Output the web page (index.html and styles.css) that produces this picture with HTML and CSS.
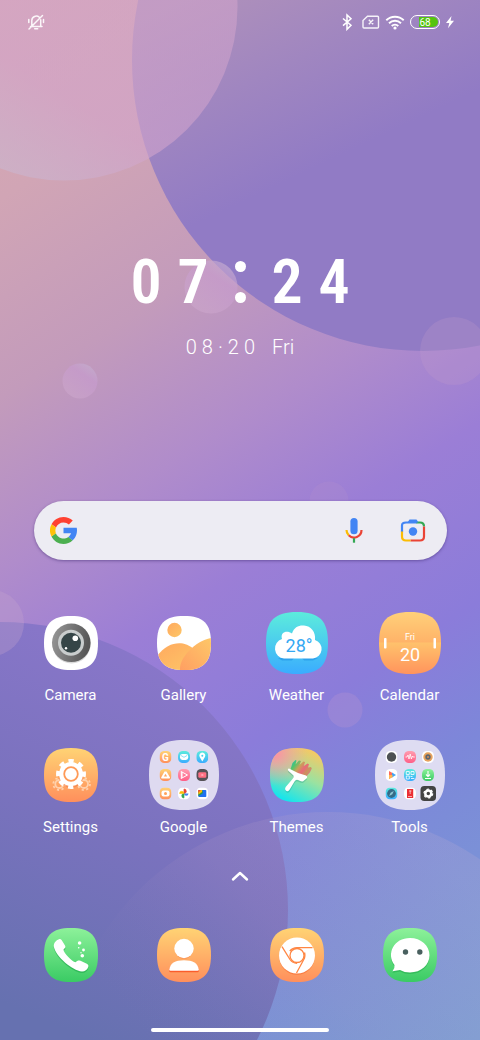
FILE: index.html
```html
<!DOCTYPE html>
<html lang="en">
<head>
<meta charset="utf-8">
<meta name="viewport" content="width=device-width, initial-scale=1">
<title>Home screen</title>
<link rel="stylesheet" href="styles.css">
</head>
<body>
<svg class="wallpaper" viewBox="0 0 480 1040" preserveAspectRatio="xMidYMid slice" aria-hidden="true">
  <defs>
    <linearGradient id="base" gradientUnits="userSpaceOnUse" x1="0" y1="0" x2="618" y2="989">
      <stop offset="0" stop-color="#d8a8b2"/><stop offset=".145" stop-color="#d1a5b5"/><stop offset=".29" stop-color="#c39bbb"/><stop offset=".415" stop-color="#b08ccb"/><stop offset=".525" stop-color="#9b7ed6"/><stop offset=".655" stop-color="#8b7cda"/><stop offset=".75" stop-color="#7d87d9"/><stop offset=".97" stop-color="#789fd4"/>
    </linearGradient>
    <linearGradient id="big" gradientUnits="userSpaceOnUse" x1="220" y1="-20" x2="310" y2="170">
      <stop offset="0" stop-color="#b091ba"/><stop offset=".5" stop-color="#a086c0"/><stop offset="1" stop-color="#917bc5"/>
    </linearGradient>
    <linearGradient id="tl" gradientUnits="userSpaceOnUse" x1="120" y1="20" x2="20" y2="180">
      <stop offset="0" stop-color="#d2a4cc" stop-opacity=".55"/><stop offset=".5" stop-color="#d2a4cc" stop-opacity=".6"/><stop offset="1" stop-color="#cab6d0" stop-opacity=".6"/>
    </linearGradient>
    <linearGradient id="bl" gradientUnits="userSpaceOnUse" x1="180" y1="640" x2="20" y2="1010">
      <stop offset="0" stop-color="#8b77cb"/><stop offset=".5" stop-color="#7a72be"/><stop offset="1" stop-color="#6671b0"/>
    </linearGradient>
    <linearGradient id="br" gradientUnits="userSpaceOnUse" x1="400" y1="812" x2="150" y2="1040">
      <stop offset="0" stop-color="#b8aad2" stop-opacity=".24"/><stop offset=".5" stop-color="#a890c4" stop-opacity=".2"/><stop offset="1" stop-color="#7c78b8" stop-opacity="0"/>
    </linearGradient>
    <linearGradient id="bubble" x1=".9" y1="0" x2=".3" y2=".9">
      <stop offset="0" stop-color="#c4b4d0" stop-opacity=".7"/><stop offset=".4" stop-color="#c89cd0" stop-opacity=".6"/><stop offset="1" stop-color="#cca6cc" stop-opacity=".6"/>
    </linearGradient>
  </defs>
  <rect width="480" height="1040" fill="url(#base)"/>
  <circle cx="423" cy="60" r="291" fill="url(#big)"/>
  <circle cx="64" cy="7" r="173.5" fill="url(#tl)"/>
  <circle cx="211" cy="287" r="26.5" fill="url(#bubble)"/>
  <circle cx="80" cy="381" r="17.5" fill="url(#bubble)"/>
  <circle cx="454" cy="351" r="34" fill="#c29ccc" fill-opacity=".25"/>
  <circle cx="329" cy="501" r="19.5" fill="#c29ccc" fill-opacity=".15"/>
  <circle cx="0" cy="910" r="288" fill="url(#bl)"/>
  <circle cx="-9" cy="623" r="33" fill="#c8a4cc" fill-opacity=".3"/>
  <circle cx="328" cy="1080" r="268" fill="url(#br)"/>
  <circle cx="345" cy="710" r="17.5" fill="#b896d0" fill-opacity=".3"/>
</svg>

<svg class="defs" width="0" height="0" aria-hidden="true">
  <defs>
    <linearGradient id="orange" x1="0" y1="0" x2="0" y2="1"><stop offset="0" stop-color="#ffd374"/><stop offset="1" stop-color="#ff8f5c"/></linearGradient>
    <linearGradient id="green" x1="0" y1="0" x2="0" y2="1"><stop offset="0" stop-color="#8df19a"/><stop offset="1" stop-color="#3acb64"/></linearGradient>
    <linearGradient id="blue" x1="0" y1="0" x2="0" y2="1"><stop offset="0" stop-color="#5cecdc"/><stop offset="1" stop-color="#3aacff"/></linearGradient>
    <linearGradient id="pink" x1="0" y1="0" x2="0" y2="1"><stop offset="0" stop-color="#ff9db0"/><stop offset="1" stop-color="#ff5f87"/></linearGradient>
    <linearGradient id="lens" x1="0" y1="0" x2="1" y2=".2"><stop offset="0" stop-color="#999"/><stop offset="1" stop-color="#575757"/></linearGradient>
    <linearGradient id="hill" x1="0" y1="0" x2="1" y2="1"><stop offset="0" stop-color="#ffa95f"/><stop offset="1" stop-color="#fdc768"/></linearGradient>
    <linearGradient id="hill2" x1="1" y1="0" x2="0" y2="1"><stop offset="0" stop-color="#fdc768"/><stop offset="1" stop-color="#ff9f62"/></linearGradient>
    <linearGradient id="calTop" x1="0" y1="0" x2="0" y2="1"><stop offset="0" stop-color="#ffd079"/><stop offset="1" stop-color="#ffb268"/></linearGradient>
    <linearGradient id="calBottom" x1="0" y1="0" x2="0" y2="1"><stop offset="0" stop-color="#ffc26c"/><stop offset="1" stop-color="#ff935c"/></linearGradient>
    <linearGradient id="theme" x1=".8" y1="0" x2=".3" y2="1"><stop offset="0" stop-color="#ffc65e"/><stop offset=".5" stop-color="#9be2a0"/><stop offset="1" stop-color="#10e5f0"/></linearGradient>
    <radialGradient id="themePink" cx=".1" cy=".1" r=".6"><stop offset="0" stop-color="#ff8fa4"/><stop offset="1" stop-color="#ff9fa0" stop-opacity="0"/></radialGradient>
    <linearGradient id="bristle" x1="0" y1=".2" x2="1" y2=".8"><stop offset="0" stop-color="#2fb8b0"/><stop offset=".2" stop-color="#4fc66a"/><stop offset=".4" stop-color="#c9a158"/><stop offset=".6" stop-color="#e86a78"/><stop offset=".8" stop-color="#c9955c"/><stop offset="1" stop-color="#e0679a"/></linearGradient>
    <symbol id="squircle" viewBox="0 0 54 54"><path d="M27 0C46.500 0 54 7.500 54 27S46.500 54 27 54 0 46.500 0 27 7.500 0 27 0Z"/></symbol>
    <clipPath id="clip"><path d="M27 0C46.500 0 54 7.500 54 27S46.500 54 27 54 0 46.500 0 27 7.500 0 27 0Z"/></clipPath>
    <clipPath id="clipLarge"><path d="M31 0C53.500 0 62 8.500 62 31S53.500 62 31 62 0 53.500 0 31 8.500 0 31 0Z"/></clipPath>
  </defs>
</svg>

<header class="status">
  <svg class="status-icon" viewBox="0 0 18 18" role="img" aria-label="Silent"><g fill="none" stroke="#fff" stroke-width="1.500" stroke-linecap="round" stroke-linejoin="round" opacity=".9"><path d="M3.500 13.500H15M4.800 13V7.500a4.500 4.500 0 0 1 7.500-3.200M13.700 6.800V13M7.700 15.800h3M2 16 15.500 2.500M1.800 6.500v3M16.500 6.500v3"/></g></svg>
  <div class="status-right">
    <svg class="bluetooth" viewBox="0 0 12 18" role="img" aria-label="Bluetooth"><path d="M2 5.500 10 12.300 6 16.300V2L10 5.800 2 12.600" fill="none" stroke="#fff" stroke-width="1.500"/></svg>
    <svg class="status-icon" viewBox="0 0 18 18" role="img" aria-label="No SIM"><path d="M5.500 3.300H15.500a1 1 0 0 1 1 1V14a1 1 0 0 1-1 1H2a1 1 0 0 1-1-1V7.500ZM6.800 6.800l4.400 4.400M11.200 6.800 6.800 11.200" fill="none" stroke="#fff" stroke-opacity=".9" stroke-width="1.400"/></svg>
    <svg class="wifi" viewBox="0 0 20 18" role="img" aria-label="Wi-Fi"><g fill="none" stroke="#fff" stroke-width="1.900"><path d="M1.300 7.200a12.500 12.500 0 0 1 17.400 0M4 10.200a8.600 8.600 0 0 1 12 0M6.700 13a4.800 4.800 0 0 1 6.600 0"/></g><circle cx="10" cy="15" r="1.600" fill="#fff"/></svg>
    <div class="battery"><span class="battery-level">68</span></div>
    <svg class="bolt" viewBox="0 0 10 14" role="img" aria-label="Charging"><path d="M6.500 1 1 8h3.300L3 13.200 9 5.800H5.600Z" fill="#fff"/></svg>
  </div>
</header>

<main class="home">
  <section class="clock" aria-label="Clock">
    <div class="time"><span>0</span><span>7</span><span class="colon"><i></i><i></i></span><span>2</span><span>4</span></div>
    <div class="date"><span>0</span><span>8</span><span>·</span><span>2</span><span>0</span><span class="day">Fri</span></div>
  </section>

  <form class="search" role="search">
    <svg class="g-logo" viewBox="4 4 40 40" aria-hidden="true">
      <path fill="#4285f4" d="M43.600 20H24v8h11.300c-.8 2.300-2.300 4.200-4.200 5.600l6.200 5.200C36.900 39.200 44 34 44 24c0-1.300-.1-2.700-.4-4z"/>
      <path fill="#ff4131" d="m6.300 14.700 6.600 4.800C14.700 15.100 19 12 24 12c3.100 0 5.800 1.200 8 3l5.700-5.700C34 6.100 29.300 4 24 4 16.300 4 9.700 8.300 6.300 14.700z"/>
      <path fill="#4caf50" d="M24 44c5.200 0 9.900-2 13.400-5.200l-6.200-5.200A12 12 0 0 1 12.700 28l-6.500 5C9.500 39.600 16.200 44 24 44z"/>
      <path fill="#ffc107" d="M6.300 14.700a20 20 0 0 0-.1 18.300l6.500-5a12 12 0 0 1 .2-8.500z"/>
    </svg>
    <input class="search-input" type="text" aria-label="Search">
    <button class="search-button" type="button" aria-label="Voice search">
      <svg class="mic" viewBox="0 0 24 28"><rect x="8.400" y="1" width="7.200" height="16.300" rx="3.600" fill="#4285f4"/><g fill="none" stroke-width="2.200"><path d="M4.500 13a7.500 7.500 0 0 0 2.200 5.300" stroke="#fbbc04"/><path d="M6.700 18.300A7.500 7.500 0 0 0 19.500 13" stroke="#ea4335"/><path d="M12 21.200v4.500" stroke="#34a853"/></g></svg>
    </button>
    <button class="search-button" type="button" aria-label="Search by image">
      <svg class="camera-lens" viewBox="0 0 26 26"><g fill="none" stroke-width="2.200"><path d="M2 14V7.500Q2 4.500 6 4.500H17" stroke="#4285f4"/><path d="M16.500 4.500H20Q24 4.500 24 8.500" stroke="#34a853"/><path d="M24 8.500V18.500Q24 22.500 20 22.500H10.500" stroke="#ea4335"/><path d="M10.500 22.500H6Q2 22.500 2 18.500V13.500" stroke="#fbbc04"/></g><path d="M7.500 4.500 9.500 1.500h7L18.500 4.500Z" fill="#4285f4"/><circle cx="13" cy="13.500" r="4.200" fill="#4285f4"/></svg>
    </button>
  </form>

  <nav class="apps" aria-label="Apps">
    <a class="app" href="#camera"><span class="tile"><svg class="icon" viewBox="0 0 54 54" aria-hidden="true"><use href="#squircle" width="54" height="54" fill="#fff"/><circle cx="27.500" cy="28.500" r="19" fill="#000" opacity=".15"/><circle cx="27.300" cy="26.800" r="19.300" fill="url(#lens)"/><circle cx="27" cy="26.800" r="13" fill="#c9cdcd"/><circle cx="27" cy="26.800" r="10" fill="#354547"/><circle cx="31.300" cy="22.300" r="2.800" fill="#fff"/><circle cx="22" cy="32.300" r="1.200" fill="#fff"/></svg></span><span class="label">Camera</span></a>
    <a class="app" href="#gallery"><span class="tile"><svg class="icon" viewBox="0 0 54 54" aria-hidden="true"><g clip-path="url(#clip)"><rect width="54" height="54" fill="#fff"/><circle cx="17.500" cy="14" r="7.200" fill="url(#hill)"/><path d="M0 40C8 29 18 26 26 27.500Q34 29 42 38V54H0Z" fill="url(#hill)"/><path d="M23 54C22 42 38 25 54 22V54Z" fill="url(#hill2)"/></g></svg></span><span class="label">Gallery</span></a>
    <a class="app" href="#weather"><span class="tile"><svg class="icon-large" viewBox="0 0 62 62" aria-hidden="true"><use href="#squircle" width="62" height="62" fill="url(#blue)"/><path d="M12 46h16l-2 2.500H16ZM36 46h16l-5 2.500H38Z" fill="#1785e0" opacity=".45"/><path d="M18 46.500A10 10 0 0 1 16 27C14 20 21 18 26 21.500 28 15 33 13 38 13.500 45 14 50 20 49 28A9.500 9.500 0 0 1 47 46.500Z" fill="#fff"/><text class="degrees" x="33" y="40">28°</text></svg></span><span class="label">Weather</span></a>
    <a class="app" href="#calendar"><span class="tile"><svg class="icon-large" viewBox="0 0 62 62" aria-hidden="true"><g clip-path="url(#clipLarge)"><rect width="62" height="31" fill="url(#calTop)"/><rect y="30.500" width="62" height="32" fill="url(#calBottom)"/></g><rect x="5" y="26" width="2.500" height="10.500" rx=".8" fill="#fff"/><rect x="54.500" y="26" width="2.500" height="10.500" rx=".8" fill="#fff"/><text class="cal-day" x="31" y="27.500">Fri</text><text class="cal-date" x="31" y="49">20</text></svg></span><span class="label">Calendar</span></a>

    <a class="app" href="#settings"><span class="tile"><svg class="icon" viewBox="0 0 54 54" aria-hidden="true"><use href="#squircle" width="54" height="54" fill="url(#orange)"/><g fill="none" stroke="#ffe0c4" opacity=".75"><circle cx="15.300" cy="36" r="4" stroke-width="1.800"/><circle cx="15.300" cy="36" r="6" stroke-width="1.800" stroke-dasharray="2.200 2.510"/><circle cx="40" cy="36" r="4" stroke-width="1.800"/><circle cx="40" cy="36" r="6" stroke-width="1.800" stroke-dasharray="2.200 2.510"/></g><circle cx="27" cy="27.500" r="12.500" fill="#f1703c" opacity=".4"/><circle cx="27" cy="26" r="12" fill="#fff"/><circle cx="27" cy="26" r="12.700" fill="none" stroke="#fff" stroke-width="4.500" stroke-dasharray="5 4.970" transform="rotate(-101 27 26)"/><circle cx="27" cy="26" r="6.800" fill="#fff" stroke="#ff9a57" stroke-width="1.800"/></svg></span><span class="label">Settings</span></a>
    <a class="app" href="#google"><span class="tile"><svg class="folder" viewBox="0 0 70 70" aria-hidden="true"><use href="#squircle" width="70" height="70" fill="#dedaf0"/>
      <g fill="url(#orange)"><use href="#squircle" x="10.500" y="11" width="12" height="12"/><use href="#squircle" x="10.500" y="29" width="12" height="12"/><use href="#squircle" x="10.500" y="47.500" width="12" height="12"/></g>
      <g fill="url(#blue)"><use href="#squircle" x="29" y="11" width="12" height="12"/><use href="#squircle" x="47.300" y="11" width="12" height="12"/></g>
      <use href="#squircle" x="29" y="29" width="12" height="12" fill="url(#pink)"/><use href="#squircle" x="47.300" y="29" width="12" height="12" fill="#555257"/>
      <use href="#squircle" x="29" y="47.500" width="12" height="12" fill="#fff"/><use href="#squircle" x="47.300" y="47.500" width="12" height="12" fill="#fff"/>
      <text class="mini-g" x="16.500" y="20.500">G</text>
      <rect x="31" y="14" width="8.200" height="6" rx="2.400" fill="#fff"/><path d="m32 15.500 3 1.800 3-1.800" fill="none" stroke="#45c8ee" stroke-width=".6"/>
      <path d="M53.300 21.500 50.700 17a3 3 0 1 1 5.200 0Z" fill="#fff"/><circle cx="53.300" cy="15.700" r="1" fill="#47cdeb"/>
      <path d="M15.500 31.500h2l3.500 6q.4 1-1 1h-7q-1.200 0-.8-1Z" fill="#fff"/><path d="m16.500 33.800 1.600 2.800h-3.200Z" fill="#ffa862"/>
      <path d="m33 32 5.500 3-5.500 3Z" fill="none" stroke="#fff" stroke-width="1"/><path d="M32.300 31v8" stroke="#fff" stroke-width="1"/>
      <rect x="49.300" y="32.300" width="8" height="5.400" rx="1.200" fill="#ff6f83"/><path d="m52.500 33.700 2.500 1.300-2.500 1.300Z" fill="#fff" opacity=".5"/>
      <rect x="12.500" y="50.500" width="8" height="6" rx="2" fill="#fff"/><circle cx="16.500" cy="53.500" r="1.500" fill="#ffa25d"/>
      <path d="M35 53.500V49a2.200 2.200 0 0 1 0 4.500" fill="#ea4335" stroke="#ea4335" stroke-width=".7"/><path d="M35 53.500h4.500a2.200 2.200 0 0 1-4.500 0" fill="#4285f4"/><path d="M35 53.500V58a2.200 2.200 0 0 1 0-4.500" fill="#34a853" stroke="#34a853" stroke-width=".6"/><path d="M35 53.500h-4.500a2.200 2.200 0 0 1 4.500 0" fill="#fbbc04" stroke="#fbbc04" stroke-width=".5"/>
      <rect x="49.300" y="50" width="8" height="7" rx=".8" fill="#1f6ff0"/><path d="M49.300 50.800h4.500v2.500l-4.500 3Z" fill="#2d9650"/><path d="M49.300 50h3.800v2l-3.800 2.500Z" fill="#ffbc05"/><path d="M49.300 50h2.500l-2.500 2.800Z" fill="#ea4335"/>
    </svg></span><span class="label">Google</span></a>
    <a class="app" href="#themes"><span class="tile"><svg class="icon" viewBox="0 0 54 54" aria-hidden="true"><use href="#squircle" width="54" height="54" fill="url(#theme)"/><use href="#squircle" width="54" height="54" fill="url(#themePink)"/><path d="m20 23 2.500-8 3-3 1 .5-1 4 3.500-4 2 .5-1.500 4 4-3.500 1.500.5-1.200 4 3.700-2.500 1.500.8-1 3.200 3-.5.8 1.500-2 4-4 4.500Z" fill="url(#bristle)"/><path d="M19 22q-2 .5-.5 2.500 3 2.500 5 4.500.8 1.800-1 3.500L16 40.500q-1.500 2.500.8 4 2 .8 3.200-1.500L24.500 35q1.500-2.500 3.500-1.500 4.500 2.500 6 .5L37 31.500q.7-2-1-2.500Q26.500 26.500 19 22Z" fill="#087f78" opacity=".25"/><path d="M19 20.500q-2 .5-.5 2.500 3 2.500 5 4.500.8 1.800-1 3.500L15.700 39q-1.500 2.500.8 4 2 .8 3.200-1.500L24.500 33.500q1.500-2.500 3.500-1.500 4.500 2.500 6 .5L37 30q.7-2-1-2.500Q26.500 25 19 20.500Z" fill="#fff"/></svg></span><span class="label">Themes</span></a>
    <a class="app" href="#tools"><span class="tile"><svg class="folder" viewBox="0 0 70 70" aria-hidden="true"><use href="#squircle" width="70" height="70" fill="#dedcf2"/>
      <g fill="#fff"><use href="#squircle" x="10.500" y="11" width="12" height="12"/><use href="#squircle" x="47" y="11" width="12" height="12"/><use href="#squircle" x="10.500" y="29" width="12" height="12"/><use href="#squircle" x="29" y="47.500" width="12" height="12"/></g>
      <use href="#squircle" x="29" y="11" width="12" height="12" fill="url(#pink)"/><g fill="url(#blue)"><use href="#squircle" x="29" y="29" width="12" height="12"/><use href="#squircle" x="10.500" y="47.500" width="12" height="12"/></g><use href="#squircle" x="47" y="29" width="12" height="12" fill="url(#green)"/>
      <circle cx="16.500" cy="17" r="4.700" fill="#4d5153"/>
      <path d="M30.500 17h1.500l1-2 1 4 1.200-5 1.200 5 1-3 .7 1h1.700" fill="none" stroke="#fff" stroke-width=".8"/>
      <circle cx="53" cy="17" r="4.700" fill="#e7a25e"/><circle cx="53" cy="17" r="2.700" fill="#5d6670"/><circle cx="53" cy="17" r="1" fill="#d78b55"/>
      <path d="m14 31 3.500 2v4L14 39Z" fill="#ff6a5c"/><path d="m17 32.500 4 2.500-4 2.500Z" fill="#42a5f5"/><path d="M14 35h3.500v2L14 39Z" fill="#ffb84d"/>
      <path d="M31.300 31.500h3v3h-3ZM36 31.500h3v3h-3ZM31.300 36h3v3h-3ZM35.500 36.500h2M36 38.500h3.300" fill="none" stroke="#fff" stroke-width=".8"/>
      <path d="M53 31v5M51 34.500l2 2 2-2M50 38.500h6" fill="none" stroke="#fff" stroke-width="1.100"/>
      <circle cx="16.500" cy="53.500" r="4.400" fill="#356b87"/><path d="m18.800 51-1.500 3.300-3.200 1.800 1.500-3.400Z" fill="#8ec9d5"/>
      <rect x="32" y="49" width="6.200" height="9" fill="#eb2f35"/><path d="M34 51h2.500M35.200 50.500v3.500M33 56.500h4" stroke="#fff" stroke-width=".6"/>
      <rect x="45.500" y="46" width="15.500" height="15" rx="3.800" fill="#434343"/><circle cx="53.300" cy="53.500" r="3" fill="none" stroke="#fff" stroke-width="2.500"/><circle cx="53.300" cy="53.500" r="4.400" fill="none" stroke="#fff" stroke-width="1.200" stroke-dasharray="2.300 2.300"/>
    </svg></span><span class="label">Tools</span></a>
  </nav>

  <button class="drawer" type="button" aria-label="Open app drawer"><svg class="chevron" viewBox="0 0 18 12"><path d="m2 9.500 7-6.500 7 6.500" fill="none" stroke="#fff" stroke-width="2.400" stroke-linecap="round" stroke-linejoin="round"/></svg></button>

  <nav class="dock" aria-label="Dock">
    <a class="dock-app" href="#phone" aria-label="Phone"><svg class="icon" viewBox="0 0 54 54"><use href="#squircle" width="54" height="54" fill="url(#green)"/><g fill="#fff"><path d="M15 12.700C16 12.300 17 12.700 17.600 13.500L21 19C21.800 20.400 21.400 21.300 19.500 23 19.300 26 28 35 31.500 35.800 33.500 33.700 34.800 33.700 36.500 34.300L42.800 37.300C44.500 38.300 44.600 39.300 44.200 40.500 43.200 43.300 41 45 38 45 28 44 12 30 9.900 20.500 9.300 16.500 12 13.800 15 12.700Z" fill="#169c42" opacity=".45"/><path d="M15 11.200C16 10.800 17 11.200 17.600 12L21 17.500C21.800 18.900 21.400 19.800 19.500 21.500 19.300 24.500 28 33.500 31.500 34.300 33.500 32.200 34.800 32.200 36.500 32.800L42.800 35.800C44.500 36.800 44.600 37.800 44.200 39 43.200 41.800 41 43.500 38 43.500 28 42.500 12 28.500 9.900 19 9.300 15 12 12.300 15 11.200Z"/><circle cx="35.600" cy="15" r="1.800"/><circle cx="34.700" cy="19.700" r=".8"/><circle cx="39.500" cy="22" r="1.400"/><circle cx="37" cy="24.700" r=".7"/><circle cx="38.300" cy="27.700" r="1.800"/></g></svg></a>
    <a class="dock-app" href="#contacts" aria-label="Contacts"><svg class="icon" viewBox="0 0 54 54"><use href="#squircle" width="54" height="54" fill="url(#orange)"/><circle cx="27" cy="22" r="9" fill="#f66b31" opacity=".4"/><path d="M12.300 43Q11.500 34 27 34T41.800 43Q41.800 44.300 40.500 44.300H13.500Q12.300 44.300 12.300 43Z" fill="#fa5d2c"/><circle cx="27" cy="20.500" r="9.700" fill="#fff"/><path d="M12.300 41.500Q13.500 32.300 27 32.300T41.800 41.500Q41.800 42.800 40.500 42.800H13.500Q12.300 42.800 12.300 41.500Z" fill="#fff"/></svg></a>
    <a class="dock-app" href="#chrome" aria-label="Chrome"><svg class="icon" viewBox="0 0 54 54"><use href="#squircle" width="54" height="54" fill="url(#orange)"/><circle cx="27" cy="29" r="17.800" fill="#f66b31" opacity=".6"/><circle cx="27" cy="27.500" r="18" fill="#fff"/><g fill="none" stroke="#ff8643" stroke-width="1.300"><circle cx="27" cy="27.500" r="7"/><path d="M19.800 23Q22.500 19.800 27 19.700H42.500M12 18.700 20 31.500Q22.500 35.300 27 35.300M34.500 24.500Q35.800 28.500 33.500 32L26.500 45"/></g></svg></a>
    <a class="dock-app" href="#messages" aria-label="WeChat"><svg class="icon" viewBox="0 0 54 54"><use href="#squircle" width="54" height="54" fill="url(#green)"/><path d="M11.500 38.500C3 27 11 11.500 27 11.500 38 11.500 46.500 19 46.500 28.800S38 46 27 46Q21.500 46 17 43.500L9.500 44.800Q12 41.500 11.500 38.500Z" fill="#169c42" opacity=".4"/><path d="M11.500 37C3 25.500 11 10 27 10 38 10 46.500 17.500 46.500 27.300S38 44.500 27 44.500Q21.500 44.500 17 42L9.500 43.300Q12 40 11.500 37Z" fill="#fff"/><circle cx="22.500" cy="24" r="2.700" fill="#49605f"/><circle cx="36.800" cy="24" r="2.700" fill="#49605f"/></svg></a>
  </nav>
</main>
<footer class="home-indicator"></footer>
</body>
</html>
```
FILE: styles.css
```css
* {
  box-sizing: border-box;
}

body {
  margin: 0;
  min-height: 100vh;
  display: flex;
  flex-direction: column;
  background: #9b7ed6;
  color: #fff;
  font-family: Roboto, "Noto Sans", sans-serif;
  overflow-x: hidden;
}

a {
  color: inherit;
  text-decoration: none;
}

button {
  padding: 0;
  border: 0;
  background: none;
  color: inherit;
  font: inherit;
}

svg {
  display: block;
  flex: none;
}

.wallpaper {
  position: absolute;
  inset: 0;
  z-index: -1;
  width: 100%;
  height: 100%;
}

.defs {
  position: absolute;
}

.status {
  display: flex;
  justify-content: space-between;
  align-items: center;
  height: 44px;
  padding: 0 25px 0 27px;
}

.status-right {
  display: flex;
  align-items: center;
  gap: 5px;
}

.status-icon {
  width: 18px;
  height: 18px;
}

.bluetooth {
  width: 12px;
  height: 18px;
  margin-right: 4px;
}

.wifi {
  width: 20px;
  height: 18px;
}

.battery {
  width: 30px;
  height: 14px;
  padding: 1px;
  border: 1px solid #fff;
  border-radius: 7px;
}

.battery-level {
  display: block;
  height: 10px;
  border-radius: 5px;
  background: linear-gradient(90deg, transparent 25%, #55c40f 25%);
  font-size: 10px;
  line-height: 11px;
  text-align: center;
}

.bolt {
  width: 10px;
  height: 14px;
}

.home {
  flex: 1;
  display: flex;
  flex-direction: column;
}

.clock {
  display: flex;
  flex-direction: column;
  align-items: center;
  padding-top: 206px;
}

.time {
  display: grid;
  grid-template-columns: repeat(5, 47px);
  justify-items: center;
  font-family: "Liberation Sans Narrow", "Roboto Condensed", Roboto, sans-serif;
  font-size: 62px;
  font-weight: 600;
  line-height: 64px;
}

.colon {
  display: flex;
  flex-direction: column;
  justify-content: center;
  gap: 20px;
}

.colon i {
  width: 11px;
  height: 11px;
  border-radius: 50%;
  background: #fff;
}

.date {
  display: flex;
  gap: 5px;
  padding-top: 21px;
  font-size: 20px;
  font-weight: 300;
  line-height: 24px;
}

.day {
  margin-left: 12px;
}

.search {
  display: flex;
  align-items: center;
  height: 59px;
  margin: 142px 33px 0 34px;
  padding: 0 14px 0 16px;
  border-radius: 30px;
  background: #edecf3;
  box-shadow: 0 1px 3px rgba(60, 40, 110, 0.5);
}

.g-logo {
  width: 27px;
  height: 27px;
}

.search-input {
  flex: 1;
  min-width: 0;
  height: 40px;
  border: 0;
  outline: 0;
  background: none;
  font: inherit;
}

.search-button {
  display: grid;
  place-items: center;
  width: 40px;
  height: 40px;
}

.search-button + .search-button {
  margin-left: 19px;
}

.mic {
  width: 24px;
  height: 28px;
}

.camera-lens {
  width: 26px;
  height: 26px;
}

.apps,
.dock {
  display: grid;
  grid-template-columns: repeat(4, 1fr);
  padding: 0 14px;
}

.apps {
  row-gap: 34px;
  padding-top: 47px;
}

.app {
  display: flex;
  flex-direction: column;
  align-items: center;
  gap: 6px;
}

.tile {
  display: grid;
  place-items: center;
  height: 72px;
}

.icon {
  width: 54px;
  height: 54px;
}

.icon-large {
  width: 62px;
  height: 62px;
}

.folder {
  width: 70px;
  height: 70px;
}

.label {
  font-size: 15px;
  line-height: 20px;
}

.degrees,
.cal-day,
.cal-date,
.mini-g {
  fill: #fff;
  text-anchor: middle;
}

.degrees {
  fill: #35a8f3;
  font-size: 18px;
}

.cal-day {
  font-size: 9px;
}

.cal-date {
  font-size: 18px;
}

.mini-g {
  font-size: 10px;
  font-weight: 700;
}

.drawer {
  display: grid;
  place-items: center;
  height: 40px;
  margin-top: 19px;
}

.chevron {
  width: 18px;
  height: 12px;
}

.dock {
  padding-top: 32px;
}

.dock-app {
  display: grid;
  place-items: center;
}

.home-indicator {
  width: 37%;
  height: 4px;
  margin: 44px auto 8px;
  border-radius: 2px;
  background: #fff;
}
```
